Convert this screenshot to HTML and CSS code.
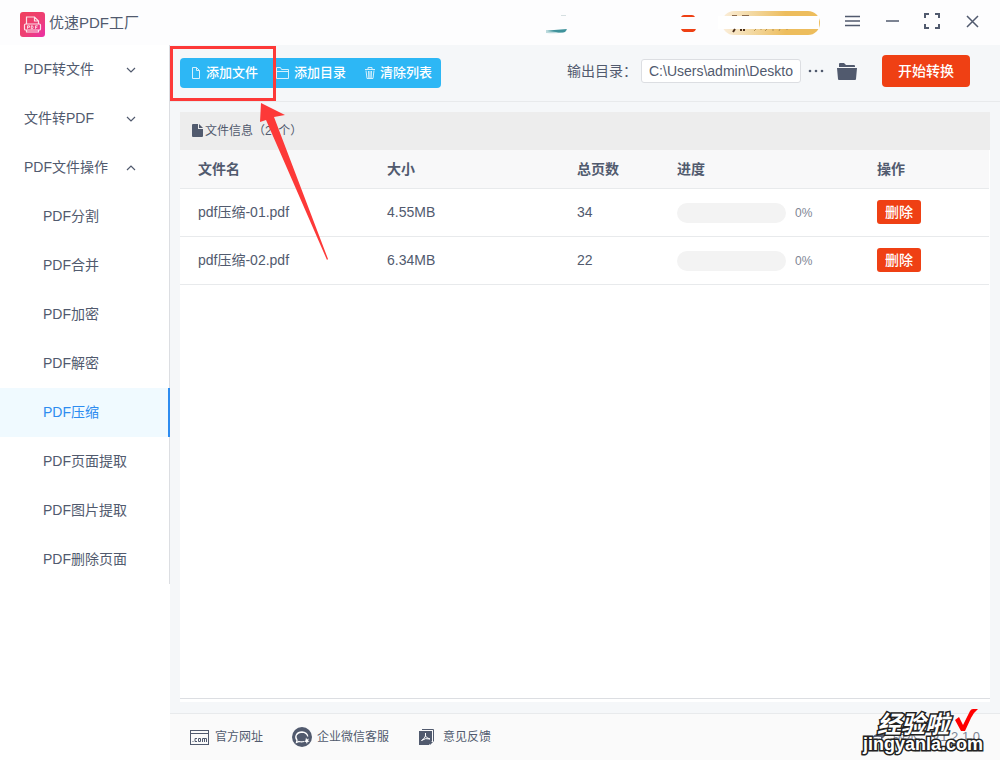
FILE: index.html
```html
<!DOCTYPE html>
<html lang="zh-CN">
<head>
<meta charset="utf-8">
<meta name="viewport" content="width=device-width, initial-scale=1">
<title>优速PDF工厂</title>
<link rel="stylesheet" href="styles.css">
</head>
<body>
<div class="app">
  <header class="titlebar">
    <div class="brand">
      <svg class="brand-logo" viewBox="0 0 25 25" width="25" height="25" aria-hidden="true">
        <defs><linearGradient id="logo" x1="0" y1="0" x2="1" y2="1"><stop offset="0" stop-color="#f0405c"/><stop offset=".55" stop-color="#ee3f74"/><stop offset="1" stop-color="#ea30a8"/></linearGradient></defs>
        <rect width="25" height="25" rx="3" fill="url(#logo)"/>
        <g fill="none" stroke="#fff" stroke-width="1.2" opacity=".85">
          <path d="M6.500 12V5h8l4 4v3M14.500 5v4h4"/>
          <rect x="4.500" y="12" width="16" height="6" rx="1"/>
          <path d="M6.500 18v2h12v-2"/>
          <path stroke-width=".9" d="M7.500 16.800v-3h2v1.500h-2M11.300 13.800v3h1.200q1.300-1.500 0-3zM15.500 16.800v-3h2.200M15.500 15.300h1.800"/>
        </g>
      </svg>
      <h1 class="brand-name">优速PDF工厂</h1>
    </div>
    <div class="account">
      <svg width="280" height="30" viewBox="0 0 280 30" aria-hidden="true">
        <defs><linearGradient id="gold"><stop offset="0" stop-color="#fbeedb"/><stop offset=".3" stop-color="#f3d9a3"/><stop offset=".65" stop-color="#edbd5d"/><stop offset="1" stop-color="#edbd5d"/></linearGradient></defs>
        <path d="M2 25h21l-2 2q-7 2-19 1z" fill="#bcdadd"/><path d="M10 25l13-1-2 3q-4 1-9 0l-9-1z" fill="#3f929b"/>
        <path d="M17 10.500h5" stroke="#d5dfe1"/>
        <path d="M137 12q1-2 3-2h8q2 0 3 2z" fill="#ee4014"/>
        <path d="M137 24h15q-1 3-3 3h-9q-2 0-3-3z" fill="#ee4014"/>
        <rect x="178" y="6" width="98" height="24" rx="12" fill="url(#gold)"/>
        <rect x="174" y="11" width="101" height="13" fill="#fff"/>
        <path d="M188 10.500h5M198 10.500h7" stroke="#8b6a4b"/>
        <path d="M191 24l-2 3M197 24v2M200 24v2" stroke="#4c301c" stroke-width="2"/>
        <path d="M212 24l-2 2M217 24v1M223 24l-2 2M229 24v2M236 24l-1 2M243 24v1" stroke="#b29255"/>
      </svg>
    </div>
    <div class="window-controls">
      <button type="button" aria-label="菜单"><svg width="18" height="18" viewBox="0 0 18 18"><path d="M2 4.500h15M2 9h15M2 13.500h15"/></svg></button>
      <button type="button" aria-label="最小化"><svg width="18" height="18" viewBox="0 0 18 18"><path d="M3 9h13"/></svg></button>
      <button type="button" aria-label="最大化"><svg width="18" height="18" viewBox="0 0 18 18"><path stroke-width="2" d="M2 6V2h4M12 2h4v4M16 12v4h-4M6 16H2v-4"/></svg></button>
      <button type="button" aria-label="关闭"><svg width="18" height="18" viewBox="0 0 18 18"><path d="M4 4l11 11M15 4L4 15"/></svg></button>
    </div>
  </header>

  <div class="body">
    <nav class="sidebar" aria-label="功能">
      <ul class="menu">
        <li><button type="button" class="group">PDF转文件<svg width="10" height="6" viewBox="0 0 10 6"><path d="M1 1l4 4 4-4"/></svg></button></li>
        <li><button type="button" class="group">文件转PDF<svg width="10" height="6" viewBox="0 0 10 6"><path d="M1 1l4 4 4-4"/></svg></button></li>
        <li><button type="button" class="group" aria-expanded="true">PDF文件操作<svg width="10" height="6" viewBox="0 0 10 6"><path d="M1 5l4-4 4 4"/></svg></button></li>
        <li><a class="item" href="#">PDF分割</a></li>
        <li><a class="item" href="#">PDF合并</a></li>
        <li><a class="item" href="#">PDF加密</a></li>
        <li><a class="item" href="#">PDF解密</a></li>
        <li><a class="item active" href="#" aria-current="page">PDF压缩</a></li>
        <li><a class="item" href="#">PDF页面提取</a></li>
        <li><a class="item" href="#">PDF图片提取</a></li>
        <li><a class="item" href="#">PDF删除页面</a></li>
      </ul>
    </nav>

    <div class="workspace">
      <div class="toolbar">
        <div class="file-actions">
          <button type="button" class="add-file">
            <svg width="12" height="12" viewBox="0 0 12 12"><path d="M2.500.5h4l3 3v8h-7zM6.500.5v3h3"/></svg>添加文件
            <svg class="callout" width="170" height="220" viewBox="0 0 170 220" aria-hidden="true"><rect x="1.500" y="1.500" width="103" height="52" fill="none" stroke="#fd3938" stroke-width="3"/><path d="M91 57l-1 19 6-2 61 140 1-1-54-142 11-2z" fill="#fd3938"/></svg>
          </button>
          <button type="button" class="add-folder"><svg width="14" height="12" viewBox="0 0 14 12"><path d="M.5 11.500v-11h4l1 2h7v9zM.5 4.500h12"/></svg>添加目录</button>
          <button type="button" class="clear-list"><svg width="12" height="12" viewBox="0 0 12 12"><path d="M1 2.500h10M4 2V.5h4V2M2 3.500l1 8h6l1-8M4.500 4l.3 7M6 4v7M7.500 4l-.3 7"/></svg>清除列表</button>
        </div>
        <div class="output">
          <label for="output-path">输出目录：</label>
          <input id="output-path" type="text" value="C:\Users\admin\Desktop">
          <button type="button" class="more" aria-label="更多"><svg width="16" height="4" viewBox="0 0 16 4"><circle cx="2" cy="2" r="1.300"/><circle cx="8" cy="2" r="1.300"/><circle cx="14" cy="2" r="1.300"/></svg></button>
          <button type="button" class="open-folder" aria-label="打开目录"><svg width="20" height="17" viewBox="0 0 20 17"><path d="M2 4V1q0-1 1-1h4l2 2h8q1 0 1 1v1zM0 5h20l-1 11q0 1-1 1H2q-1 0-1-1z"/></svg></button>
          <button type="button" class="start">开始转换</button>
        </div>
      </div>

      <main class="content">
        <section class="panel">
          <h2 class="panel-title"><svg width="11" height="13" viewBox="0 0 11 13"><path d="M1 0h5v5h5v7q0 1-1 1H1q-1 0-1-1V1q0-1 1-1zM7 0l4 4H7z"/></svg>文件信息（2&nbsp; 个）</h2>
          <table class="files">
            <colgroup><col class="c-name"><col class="c-size"><col class="c-pages"><col class="c-progress"><col class="c-action"></colgroup>
            <thead><tr><th>文件名</th><th>大小</th><th>总页数</th><th>进度</th><th>操作</th></tr></thead>
            <tbody>
              <tr><td>pdf压缩-01.pdf</td><td>4.55MB</td><td>34</td><td><div class="progress"><span class="track"></span><span>0%</span></div></td><td><button type="button" class="delete">删除</button></td></tr>
              <tr><td>pdf压缩-02.pdf</td><td>6.34MB</td><td>22</td><td><div class="progress"><span class="track"></span><span>0%</span></div></td><td><button type="button" class="delete">删除</button></td></tr>
            </tbody>
          </table>
        </section>
      </main>

      <footer class="statusbar">
        <a href="#"><svg width="20" height="20" viewBox="0 0 20 20"><g fill="none" stroke="#515a6e"><rect x=".5" y="3.500" width="18" height="14"/><path d="M.5 6.500h18"/><path d="M7 11.500H5v3h2M8.500 11.500h2v3h-2zM12.500 15v-3.500h4V15M14.500 11.500V15"/></g><path d="M2.500 14h1v1h-1z" fill="#515a6e"/></svg>官方网址</a>
        <a href="#"><svg width="20" height="20" viewBox="0 0 20 20"><circle cx="10" cy="10" r="10" fill="#515a6e"/><path d="M12 14.500q-2.500.8-5 0L4.500 15.500l.5-2.300Q3 10.500 4.300 8 6 5 10 5q5 .3 5.800 4.500" fill="none" stroke="#fff" stroke-width="1.300"/><path d="M14 10.500l1 2 2-1-1 2 1.500 1-2 .5-.5 2-1-2-2-.5 1.500-1z" fill="#fff"/></svg>企业微信客服</a>
        <a href="#"><svg width="20" height="20" viewBox="0 0 20 20"><path d="M4 2.500h11.500v12" fill="none" stroke="#515a6e"/><path d="M1 4h13v10l-3 4H1z" fill="#515a6e"/><path d="M12 18v-3h3z" fill="#515a6e"/><path d="M7.500 6v3q-1 3-4 4.500Q7.500 10.500 12 12q-3.500-1-4.500-3" fill="none" stroke="#fff"/></svg>意见反馈</a>
        <div class="version">
          <span><svg width="14" height="16" viewBox="0 0 14 16"><path d="M1 9q3-5 9-4V2l4 5-4 4V8Q5 7 1 9z" fill="#515a6e"/></svg>版本：V1.2.1.0</span>
          <svg class="watermark" width="132" height="56" viewBox="0 0 132 56" role="img" aria-label="经验啦 jingyanla.com">
            <text class="wm-cn" x="19" y="27">经验啦</text>
            <text class="wm-en" x="5" y="44">jingyanla.com</text>
            <path d="M97 14l4-3 4 8 7-14q1-2 3-2h5q-4 3-7 9l-6 13h-4z" fill="#f00"/>
          </svg>
        </div>
      </footer>
    </div>
  </div>
</div>
</body>
</html>
```

FILE: styles.css
```css
* { box-sizing: border-box; }

body {
  margin: 0;
  background: #fff;
  color: #515a6e;
  font: 14px/20px "Liberation Sans", "Noto Sans CJK SC", sans-serif;
}

button, input { font: inherit; color: inherit; }
button { border: 0; padding: 0; background: none; cursor: pointer; }
a { color: inherit; text-decoration: none; }
svg { flex: none; }

.app { display: flex; flex-direction: column; min-height: 100vh; }

.titlebar {
  display: flex;
  align-items: center;
  height: 45px;
  padding: 0 19px 0 20px;
  background: #fdfdfe;
}
.brand { display: flex; align-items: center; gap: 4px; padding-top: 3px; }
.brand-name { margin: 0; font-size: 15px; font-weight: 400; line-height: 20px; padding-bottom: 2px; }
.account { display: flex; margin-left: auto; margin-right: 19px; padding-bottom: 6px; }
.window-controls { display: flex; gap: 22px; padding-bottom: 3px; }
.window-controls button { display: flex; }
.window-controls svg { fill: none; stroke: #515a6e; stroke-width: 1.5; }

.body { display: flex; flex: 1; }

.sidebar { flex: none; width: 170px; }
.menu { margin: 0; padding: 0; list-style: none; border-right: 1px solid #dcdee2; }
.group, .item { display: flex; align-items: center; height: 49px; padding-bottom: 2px; }
.group { width: 100%; justify-content: space-between; padding: 0 33px 2px 24px; }
.group svg { fill: none; stroke: #515a6e; stroke-width: 1.2; margin-top: 2px; }
.item { padding-left: 43px; }
.item.active {
  margin-right: -1px;
  border-right: 2px solid #2d8cf0;
  background: #f0faff;
  color: #2d8cf0;
}

.workspace { display: flex; flex: 1; flex-direction: column; min-width: 0; background: #f5f7f9; }

.toolbar {
  display: flex;
  align-items: center;
  justify-content: space-between;
  height: 57px;
  padding: 0 30px 4px 10px;
  border-bottom: 1px solid #e8eaec;
}
.file-actions {
  display: flex;
  align-items: center;
  gap: 18px;
  height: 30px;
  margin-top: 3px;
  padding: 0 9px 0 10px;
  border-radius: 4px;
  background: #2db7f5;
  color: #fff;
  font-size: 13px;
  font-weight: 500;
}
.file-actions button { display: flex; align-items: center; gap: 4px; }
.file-actions button > svg:first-child { fill: none; stroke: #fff; stroke-width: 1; opacity: .8; }
.file-actions .add-file { position: relative; }
.callout { position: absolute; left: -20px; top: -17px; pointer-events: none; z-index: 2; }

.output { display: flex; align-items: center; }
.output label { padding-bottom: 1px; }
.output input {
  width: 160px;
  height: 24px;
  margin-left: 4px;
  padding: 0 7px;
  border: 1px solid #dcdee2;
  border-radius: 3px;
  background: #fff;
}
.output svg { display: block; fill: #515a6e; }
.more { margin-left: 7px; }
.open-folder { margin-left: 13px; }
.start {
  width: 88px;
  height: 32px;
  margin-left: 25px;
  border-radius: 4px;
  background: #ef4014;
  color: #fff;
  font-weight: 500;
}

.content { display: flex; flex: 1; padding: 10px 10px 11px; }
.panel { flex: 1; min-width: 0; padding-bottom: 3px; background: linear-gradient(#dcdee2, #dcdee2) left bottom 3px / 100% 1px no-repeat #fff; }
.panel-title {
  display: flex;
  align-items: center;
  gap: 2px;
  height: 38px;
  margin: 0;
  padding: 0 0 1px 12px;
  background: #ededed;
  font-size: 12px;
  font-weight: 400;
}
.panel-title svg { fill: #515a6e; }

.files { width: 100%; padding-right: 1px; table-layout: fixed; border-collapse: separate; border-spacing: 0; }
.files th, .files td { padding: 0 0 0 18px; border-bottom: 1px solid #e8eaec; text-align: left; }
.files th { height: 39px; background: #f8f8f9; font-weight: 700; }
.files td { height: 48px; padding-bottom: 2px; }
.c-name { width: 189px; }
.c-size { width: 190px; }
.c-pages { width: 100px; }
.c-progress { width: 200px; }
.progress { display: flex; align-items: center; gap: 9px; padding-top: 2px; font-size: 12px; color: #808695; }
.track { width: 109px; height: 20px; border-radius: 10px; background: #f3f3f3; }
.delete {
  display: block;
  width: 44px;
  height: 24px;
  border-radius: 3px;
  background: #ef4014;
  color: #fff;
  font-weight: 500;
}

.statusbar {
  display: flex;
  align-items: center;
  gap: 29px;
  height: 47px;
  padding: 0 20px 0 20px;
  border-top: 1px solid #e8eaec;
  background: #fafafa;
  font-size: 12px;
}
.statusbar a { display: flex; align-items: center; gap: 5px; }
.version { position: relative; margin-left: auto; font-size: 13px; color: #808695; }
.version span { display: flex; align-items: center; gap: 8px; }
.watermark { position: absolute; right: -10px; top: -21px; overflow: visible; }
.watermark text { fill: #fff; stroke: #222; stroke-width: 3px; paint-order: stroke; font-weight: 700; }
.wm-cn { font-size: 24px; font-style: italic; }
.wm-en { font-size: 18px; }
```
